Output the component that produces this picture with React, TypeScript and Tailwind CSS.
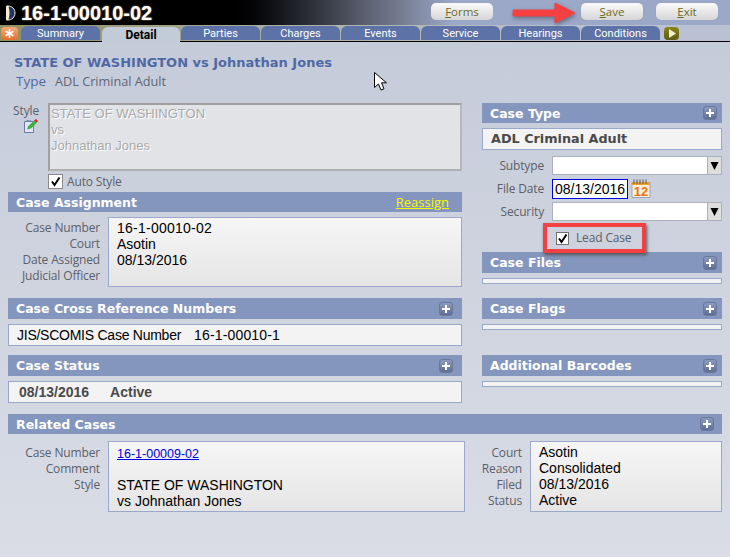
import React from "react";

const label = "font-['Open_Sans',sans-serif] text-[12px] leading-[16px] tracking-[-0.15px] text-[#5c6068]";
const value = "font-['Liberation_Sans',sans-serif] text-[14px] leading-[16px] text-black";

function Plus() {
  return (
    <span className="flex h-[14px] w-[14px] items-center justify-center rounded-[3px] border border-[#6a789c] bg-gradient-to-b from-[#8d9ac0] to-[#5f6e94]">
      <svg width="10" height="10" viewBox="0 0 10 10"><path d="M5 1v8M1 5h8" stroke="#fff" strokeWidth="2" /></svg>
    </span>
  );
}

function Head({ title, h = "h-[21px]", pr = "pr-[9px]", children }: { title: string; h?: string; pr?: string; children?: React.ReactNode }) {
  return (
    <div className={`${h} ${pr} flex items-center justify-between bg-[#8496bd] pl-2`}>
      <span className="pt-[2px] font-['DejaVu_Sans',sans-serif] text-[12.5px] font-bold leading-none text-white">{title}</span>
      {children ?? <Plus />}
    </div>
  );
}

function Strip() {
  return <div className="mt-[5px] h-[6px] border border-[#9aa8cc] bg-[#f3f3f3]" />;
}

function Btn({ k, rest }: { k: string; rest: string }) {
  return (
    <div className="flex h-[17px] w-[62px] items-center justify-center rounded-[5px] bg-gradient-to-b from-[#fafafa] to-[#d6d6d6] font-['Open_Sans',sans-serif] text-[11.5px] text-[#6a6a1e] shadow-[0_0_1px_#8a8fa0]">
      <span className="underline">{k}</span>{rest}
    </div>
  );
}

function Check({ size = "h-[15px] w-[15px]", border = "border-[#8a8a8a]" }: { size?: string; border?: string }) {
  return (
    <span className={`${size} flex shrink-0 items-center justify-center border ${border} bg-white`}>
      <svg width="11" height="11" viewBox="0 0 11 11"><path d="M2 5.500 4.500 9 9.500 1.500" fill="none" stroke="#000" strokeWidth="2" /></svg>
    </span>
  );
}

function Select({ l }: { l: string }) {
  return (
    <div className="flex h-[19px] items-center">
      <span className={`${label} w-[62px] text-right`}>{l}</span>
      <div className="ml-2 flex h-[19px] w-[170px] border border-[#aab0bd] bg-white">
        <div className="flex-1" />
        <div className="flex w-[14px] items-center justify-center border-l border-[#aab0bd] bg-[#dedede]">
          <svg width="9" height="9" viewBox="0 0 9 9"><path d="M0.500 1h8L4.500 9z" fill="#000" /></svg>
        </div>
      </div>
    </div>
  );
}

const tabs = ["Summary", "Detail", "Parties", "Charges", "Events", "Service", "Hearings", "Conditions"];

export default function App() {
  return (
    <div className="relative h-[557px] w-[730px] overflow-hidden bg-gradient-to-b from-[#c3cad8] to-[#dadde6]">
      <div className="flex h-[25px] items-center bg-gradient-to-r from-black from-[30%] via-[#5b6070] via-[50%] to-[#9ba8c8] to-[62%] pl-[5px]">
        <svg width="11" height="16" viewBox="0 0 11 16" className="mr-[5px]">
          <path d="M1.500 1H3c4 0 7 3 7 7s-3 7-7 7H1.500z" fill="#26355c" stroke="#f3ead8" />
          <path d="M1 1h2.500c0.800 4 1 5 1 7s-0.200 3-1 7H1z" fill="#f3ead8" />
        </svg>
        <span className="font-['Liberation_Sans',sans-serif] text-[20px] font-bold leading-none text-white [text-shadow:0_0_2px_#b59a70]">16-1-00010-02</span>
        <div className="mb-[2px] ml-auto mr-[12px] flex gap-[13px]">
          <div className="mr-[75px]"><Btn k="F" rest="orms" /></div>
          <Btn k="S" rest="ave" />
          <Btn k="E" rest="xit" />
        </div>
      </div>

      <div className="flex h-[17px] items-end border-b border-black bg-gradient-to-r from-[#8f9060] via-[#aeb1a4] via-[40%] to-[#b9c1d2] to-[80%] pl-[1px]">
        <span className="mb-[1px] flex h-[13px] w-[17px] items-center justify-center rounded-[4px] bg-gradient-to-b from-[#f7a878] to-[#e2702c]">
          <svg width="9" height="9" viewBox="0 0 9 9"><path d="M4.500 0v9M0.600 2.250l7.800 4.500M8.400 2.250l-7.800 4.500" stroke="#fff" strokeWidth="1.600" /></svg>
        </span>
        <div className="ml-[3px] flex gap-px">
          {tabs.map((t) => (
            <div
              key={t}
              className={
                t === "Detail"
                  ? "relative top-px ml-px flex h-[15px] w-[78px] items-center justify-center rounded-t-[6px] bg-[#c3cad8] pt-[1px] font-['Roboto',sans-serif] text-[12px] font-bold text-black"
                  : "flex h-[14px] w-[79px] items-center justify-center rounded-t-[6px] bg-[#5d72a6] pt-[3px] font-['Roboto',sans-serif] text-[11px] text-white"
              }
            >
              {t}
            </div>
          ))}
        </div>
        <span className="mb-[1px] ml-[4px] flex h-[13px] w-[15px] items-center justify-center rounded-[4px] bg-gradient-to-b from-[#8a8620] to-[#5e5a14]">
          <svg width="8" height="9" viewBox="0 0 8 9"><path d="M1 0l7 4.500L1 9z" fill="#f3f0d0" /></svg>
        </span>
      </div>

      <div className="px-2">
        <div className="h-[61px] pl-[6px] pt-[12px]">
          <div className="font-['DejaVu_Sans',sans-serif] text-[13px] font-bold leading-[18px] text-[#5069a5]">STATE OF WASHINGTON vs Johnathan Jones</div>
          <div className="flex items-baseline pl-[2px] font-['Open_Sans',sans-serif] text-[13.5px] leading-[18px] text-[#5f6675]">
            <span className="w-[39px] text-[#5069a5]">Type</span>
            <span className="text-[12.7px]">ADL Criminal Adult</span>
          </div>
        </div>

        <div className="flex justify-between">
          <div className="w-[454px]">
            <div className="flex">
              <div className="flex w-[31px] flex-col items-end">
                <span className={label}>Style</span>
                <svg width="15" height="15" viewBox="0 0 15 15" className="mr-[1px]">
                  <path d="M1.500 2.500h9v11h-9z" fill="#dfe6f6" stroke="#6a7ba8" />
                  <path d="M3 1.500h5" stroke="#8b97b8" />
                  <path d="M4 10.500l1-3 6-6 3 2-6 6z" fill="#3bb03b" />
                  <path d="M11 1.500l2-1.500 2 2-1 1.500z" fill="#e02020" />
                </svg>
              </div>
              <div className="ml-[9px] flex-1">
                <div className="h-[68px] border-2 border-[#a0a0a0] border-b-[#b0b0b0] border-r-[#b8b8b8] bg-[#e1e3e7] px-[1px] pt-[1px] font-['Liberation_Sans',sans-serif] text-[13px] leading-[16px] text-[#a9a9a9] [text-shadow:1px_1px_0_#fff]">
                  STATE OF WASHINGTON<br />vs<br />Johnathan Jones
                </div>
                <div className="mt-[3px] flex h-[15px] items-center">
                  <Check />
                  <span className={`${label} ml-[4px]`}>Auto Style</span>
                </div>
              </div>
            </div>

            <div className="mt-[3px]">
              <Head title="Case Assignment" h="h-[20px]">
                <span className="mr-[4px] font-['Open_Sans',sans-serif] text-[13px] leading-none text-[#f8f800] underline">Reassign</span>
              </Head>
              <div className="mt-[5px] flex">
                <div className={`${label} w-[92px] pt-[3px] text-right`}>
                  <div>Case Number</div><div>Court</div><div>Date Assigned</div><div>Judicial Officer</div>
                </div>
                <div className={`${value} ml-[8px] h-[70px] flex-1 border border-[#9aa8cc] bg-gradient-to-b from-[#f6f6f6] to-[#e5e5e5] pl-[8px] pt-[2px]`}>
                  <div className="tracking-[0.25px]">16-1-00010-02</div><div>Asotin</div><div>08/13/2016</div>
                </div>
              </div>
            </div>

            <div className="mt-[11px]">
              <Head title="Case Cross Reference Numbers" />
              <div className={`${value} mt-[5px] flex h-[22px] items-center border border-[#9aa8cc] bg-[#f3f3f3] pl-[8px]`}>
                <span className="tracking-[-0.25px]">JIS/SCOMIS Case Number</span>
                <span className="ml-[13px] tracking-[0.15px]">16-1-00010-1</span>
              </div>
            </div>

            <div className="mt-[9px]">
              <Head title="Case Status" />
              <div className="mt-[5px] flex h-[22px] items-center border border-[#9aa8cc] bg-[#f3f3f3] pl-[10px] font-['Liberation_Sans',sans-serif] text-[14px] font-bold text-[#4a4a4a]">
                <span>08/13/2016</span><span className="ml-[21px]">Active</span>
              </div>
            </div>
          </div>

          <div className="w-[240px]">
            <Head title="Case Type" h="h-[20px]" pr="pr-[5px]" />
            <div className="mt-[5px] flex h-[22px] items-center border border-[#9aa8cc] bg-[#f3f3f3] pl-[8px] font-['DejaVu_Sans',sans-serif] text-[12.800px] font-bold text-[#4a4a4a]">ADL Criminal Adult</div>
            <div className="mt-[6px]"><Select l="Subtype" /></div>
            <div className="mt-[4px] flex h-[20px] items-center">
              <span className={`${label} w-[62px] text-right`}>File Date</span>
              <div className={`${value} ml-2 flex h-[20px] w-[76px] items-center border border-[#0000e0] bg-white pl-[2px]`}>08/13/2016</div>
              <svg width="20" height="20" viewBox="0 0 20 20" className="ml-[3px]">
                <path d="M1 3.500h18v15H1z" fill="#f5efd8" stroke="#9aa3bd" />
                <path d="M1 3h18v3H1z" fill="#f0a030" />
                <path d="M3 0.500v4.500M6 0.500v4.500M9 0.500v4.500M12 0.500v4.500M15 0.500v4.500" stroke="#555" />
                <text x="10" y="17" textAnchor="middle" fontSize="13" fontWeight="bold" fill="#ec7410" fontFamily="Liberation Sans">12</text>
              </svg>
            </div>
            <div className="mt-[3px]"><Select l="Security" /></div>
            <div className="relative z-10 -mb-[1px] ml-[61px] mt-[2px] flex h-[30px] w-[103px] items-center border-4 border-[#f44040] pl-[9px] shadow-[1px_2px_3px_#555]">
              <Check size="h-[13px] w-[13px]" border="border-[#707070]" />
              <span className={`${label} ml-[7px]`}>Lead Case</span>
            </div>

            <div>
              <Head title="Case Files" pr="pr-[5px]" />
              <Strip />
            </div>
            <div className="mt-[14px]">
              <Head title="Case Flags" pr="pr-[5px]" />
              <Strip />
            </div>
            <div className="mt-[25px]">
              <Head title="Additional Barcodes" pr="pr-[5px]" />
              <Strip />
            </div>
          </div>
        </div>

        <div className="mt-[11px]">
          <Head title="Related Cases" h="h-[20px]" pr="pr-[8px]" />
          <div className="mt-[7px] flex">
            <div className={`${label} w-[92px] pt-[4px] text-right`}>
              <div>Case Number</div><div>Comment</div><div>Style</div>
            </div>
            <div className={`${value} ml-[8px] h-[71px] w-[357px] border border-[#9aa8cc] bg-gradient-to-b from-[#f6f6f6] to-[#e5e5e5] pl-[8px] pt-[4px]`}>
              <div className="text-[12.500px] text-[#0000e0] underline">16-1-00009-02</div>
              <div className="h-[15px]" />
              <div>STATE OF WASHINGTON</div>
              <div>vs Johnathan Jones</div>
            </div>
            <div className={`${label} w-[57px] pt-[4px] text-right`}>
              <div>Court</div><div>Reason</div><div>Filed</div><div>Status</div>
            </div>
            <div className={`${value} ml-[8px] h-[71px] w-[192px] border border-[#9aa8cc] bg-gradient-to-b from-[#f6f6f6] to-[#e5e5e5] pl-[8px] pt-[2px]`}>
              <div>Asotin</div><div>Consolidated</div><div>08/13/2016</div><div>Active</div>
            </div>
          </div>
        </div>
      </div>

      <svg width="68" height="24" viewBox="0 0 68 24" className="absolute left-[510px] top-[1px] drop-shadow-[1px_2px_2px_rgba(0,0,0,0.35)]">
        <path d="M3 9h42V2l20 10-20 10v-7H3z" fill="#f44040" stroke="#f44040" strokeLinejoin="round" />
      </svg>
      <svg width="13" height="20" viewBox="0 0 13 20" className="absolute left-[374px] top-[72px]">
        <path d="M0.500 0.500v15l4-3.500 2.500 6 3-1.200-2.500-6h5z" fill="#fff" stroke="#000" />
      </svg>
    </div>
  );
}
